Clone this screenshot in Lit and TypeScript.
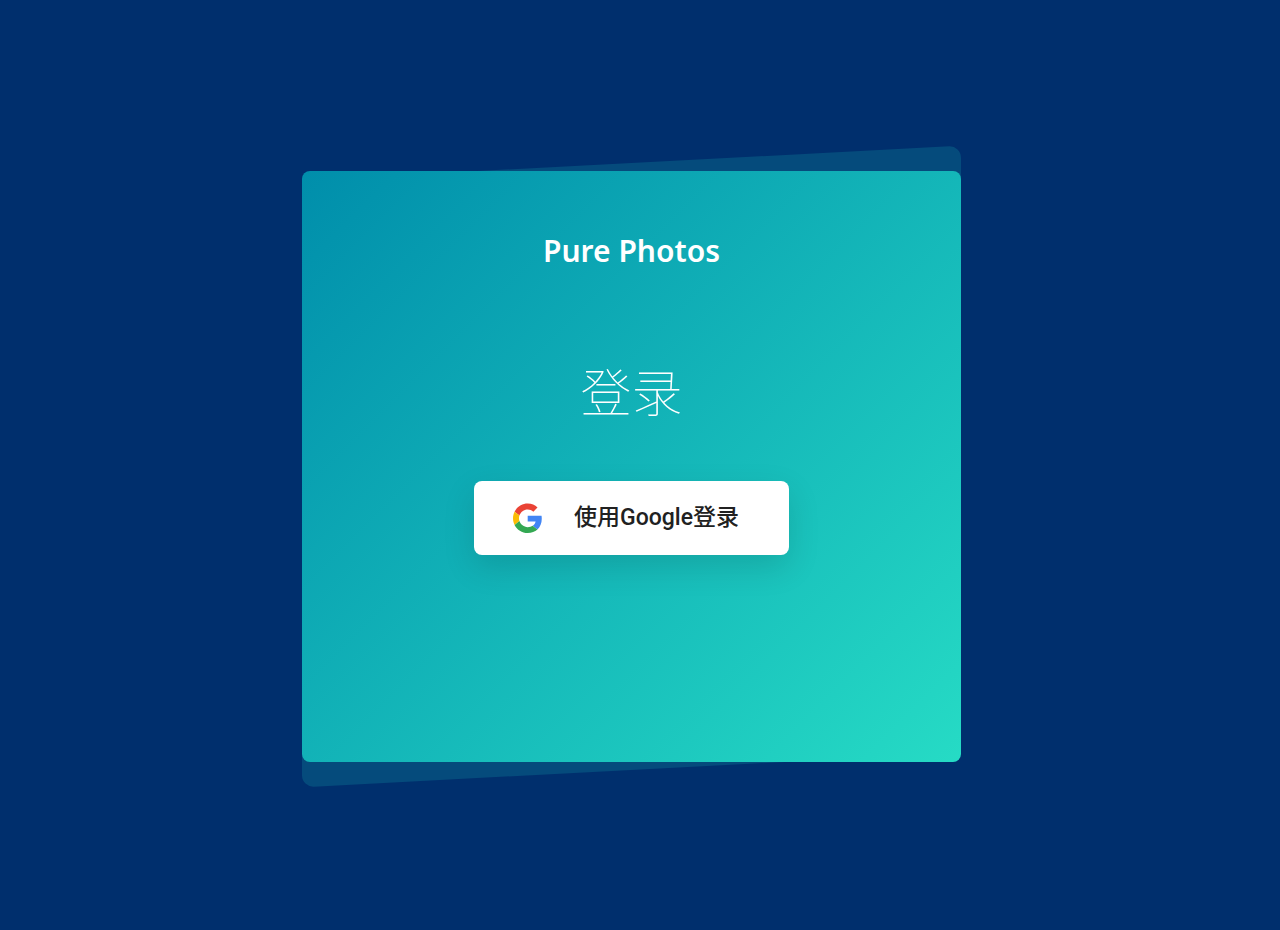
import { LitElement, html, css } from "lit";
import { customElement } from "lit/decorators.js";

@customElement("google-logo")
class GoogleLogo extends LitElement {
  static styles = css`
    :host { display: block; width: 30px; height: 30px; }
    svg { display: block; width: 100%; height: 100%; }
  `;
  render() {
    return html`
      <svg viewBox="0 -1 49 49" aria-hidden="true">
        <path fill="#EA4335" d="M24 9.5c3.54 0 6.71 1.22 9.21 3.6l6.85-6.85C35.9 2.38 30.47 0 24 0 14.62 0 6.51 5.38 2.56 13.22l7.98 6.19C12.43 13.72 17.74 9.5 24 9.5z"/>
        <path fill="#4285F4" d="M46.98 24.55c0-1.57-.15-3.09-.38-4.55H24v9.02h12.94c-.58 2.96-2.26 5.48-4.78 7.18l7.73 6c4.51-4.18 7.09-10.36 7.09-17.65z"/>
        <path fill="#FBBC05" d="M10.53 28.59c-.48-1.45-.76-2.99-.76-4.59s.27-3.14.76-4.59l-7.98-6.19C.92 16.46 0 20.12 0 24c0 3.88.92 7.54 2.56 10.78l7.97-6.19z"/>
        <path fill="#34A853" d="M24 48c6.48 0 11.93-2.13 15.89-5.81l-7.73-6c-2.15 1.45-4.92 2.3-8.16 2.3-6.26 0-11.57-4.22-13.47-9.91l-7.98 6.19C6.51 42.62 14.62 48 24 48z"/>
      </svg>`;
  }
}

@customElement("app-root")
class AppRoot extends LitElement {
  static styles = css`
    * { box-sizing: border-box; }
    :host { display: block; }
    .page {
      min-height: 100vh;
      display: flex;
      align-items: center;
      justify-content: center;
      padding: 3px 17px 0 0;
      background: #002f6d;
      font-family: Roboto, "Noto Sans CJK SC", sans-serif;
    }
    .card {
      position: relative;
      isolation: isolate;
      width: 659px;
      max-width: 100%;
      min-height: 591px;
      padding: 56px 32px;
      display: flex;
      flex-direction: column;
      align-items: center;
    }
    .card::before {
      content: "";
      position: absolute;
      inset: -8px 0;
      z-index: -2;
      border-radius: 12px;
      background: #054b7c;
      transform: skewY(-3deg);
    }
    .card::after {
      content: "";
      position: absolute;
      inset: 0;
      z-index: -1;
      border-radius: 8px;
      background: linear-gradient(135deg, #008eab, #26dbc5);
    }
    .brand {
      margin: 0;
      color: #fff;
      font: 600 30px/48px "Noto Sans", sans-serif;
    }
    .title {
      margin: 76px 0 52px;
      color: #fff;
      font: 100 51px/78px "Noto Sans CJK SC", sans-serif;
    }
    .sign-in {
      display: flex;
      align-items: center;
      gap: 31px;
      height: 74px;
      padding: 0 50px 0 39px;
      border: 0;
      border-radius: 8px;
      background: #fff;
      color: #212121;
      font: 500 23px/32px Roboto, "Noto Sans CJK SC", sans-serif;
      box-shadow: 0 12px 32px rgba(0, 0, 0, 0.13);
      cursor: pointer;
    }
  `;
  render() {
    return html`
      <main class="page">
        <section class="card">
          <h1 class="brand">Pure Photos</h1>
          <h2 class="title" lang="zh-CN">登录</h2>
          <button class="sign-in" type="button" lang="zh-CN">
            <google-logo></google-logo>
            <span>使用Google登录</span>
          </button>
        </section>
      </main>`;
  }
}
